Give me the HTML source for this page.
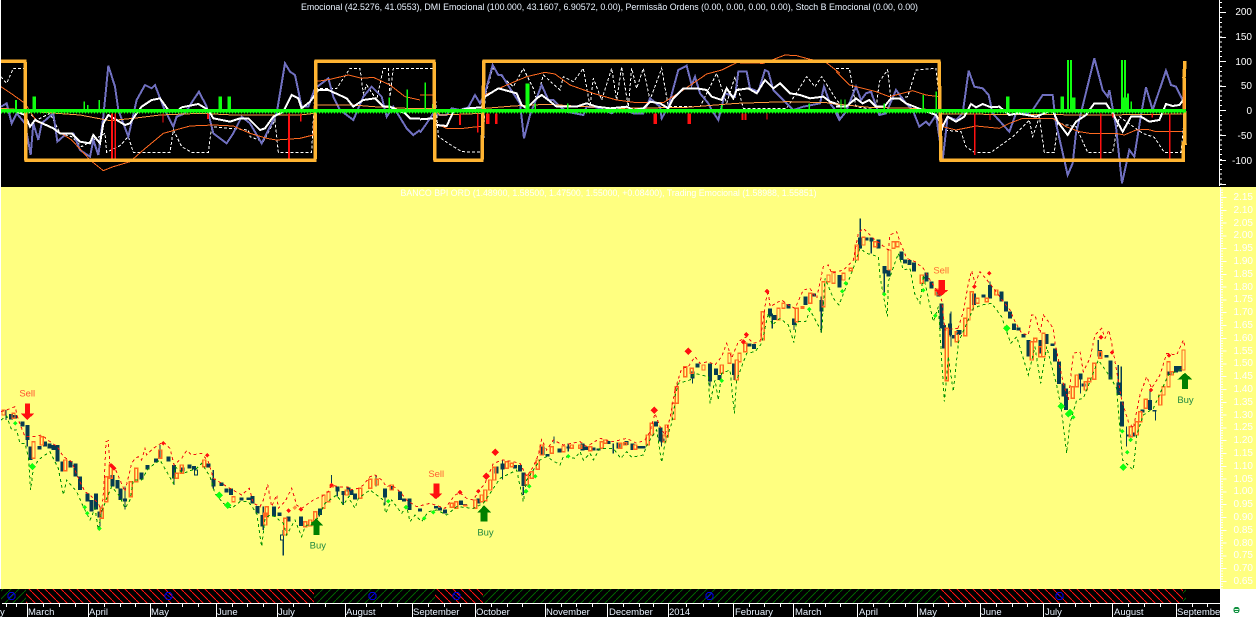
<!DOCTYPE html>
<html lang="pt"><head><meta charset="utf-8"><title>Chart</title>
<style>
html,body{margin:0;padding:0;background:#fff;width:1256px;height:617px;overflow:hidden}
svg{display:block}
text{font-family:"Liberation Sans",Arial,sans-serif;font-size:9.5px;fill:#eaf3ff}
.y text{fill:#fff;text-anchor:end;font-size:10px}
.t text{font-size:9.5px}
.n{fill:none}
.dk{fill:none;stroke:#063c50;stroke-width:12}
.wk{fill:none;stroke:#063c50;stroke-width:3.5}
.or{fill:none;stroke:#ff6a20;stroke-width:4}
.rd{fill:none;stroke:#f01010;stroke-width:3;stroke-dasharray:9 9}
.gd{fill:none;stroke:#009000;stroke-width:3;stroke-dasharray:9 9}
.gf{fill:#10ff10}.rf{fill:#ff1010}
.pu{fill:none;stroke:#7070c0;stroke-width:6}
.wh{fill:none;stroke:#fff;stroke-width:6}
.oa{fill:none;stroke:#ff6a20;stroke-width:3}
.ob{fill:none;stroke:#ff9a40;stroke-width:3}
.wd{fill:none;stroke:#fff;stroke-width:3;stroke-dasharray:9 6}
</style></head><body>
<svg xmlns="http://www.w3.org/2000/svg" width="1256" height="617" viewBox="0 0 1256 617" shape-rendering="crispEdges">
<defs>
<pattern id="hr" patternUnits="userSpaceOnUse" width="8" height="8"><path d="M0 0L8 8" stroke="#ff1010" stroke-width="1" fill="none"/></pattern>
<pattern id="hg" patternUnits="userSpaceOnUse" width="8" height="8"><path d="M0 8L8 0" stroke="#006000" stroke-width="1" fill="none"/></pattern>
</defs>
<rect width="1256" height="187" fill="#000"/>
<rect y="187" width="1256" height="402" fill="#ffff80"/>
<rect y="589" width="1220" height="28" fill="#000"/>
<rect x="1220" y="589" width="36" height="28" fill="#fff"/>
<rect x="0" y="0" width="1" height="589" fill="#fff"/>

<!-- TOP PANEL -->
<g transform="translate(0,0) scale(.33333)">
<polyline class="wd" points="3,230 20,250 40,205 75,205 80,330 110,360 150,340 180,400 215,410 245,440 315,400 320,457 360,437 385,410 400,457 510,457 520,390 530,410 545,440 575,457 625,457 635,380 745,390 750,410 790,425 825,360 835,457 935,457 945,265 1010,265 1020,250 1050,205 1080,205 1090,280 1100,255 1130,300 1150,205 1165,205 1170,290 1180,205 1260,205"/>
<polyline class="pu" points="3,320 20,310 35,370 50,340 75,370 92,465 100,370 115,420 125,370 160,340 172,425 200,400 220,400 240,450 270,470 280,420 295,465 310,350 325,197 345,260 355,330 385,410 410,300 435,255 455,265 465,255 490,320 520,380 530,350 555,340 580,300 597,275 620,320 640,400 680,430 700,400 725,350 750,370 785,430 810,380 830,340 855,190 870,215 885,225 905,320 925,320 945,265 985,235 1000,290 1020,330 1060,360 1090,290 1115,260 1145,290 1160,350 1180,320 1220,385 1240,405 1260,390"/>
<polyline class="oa" points="3,260 40,285 75,310 110,365 160,385 215,420 270,480 310,512 340,500 390,485 430,450 490,400 570,378 640,375 700,378 750,400 800,415 830,420 900,415 940,405 945,245 990,238 1045,225 1085,235 1120,232 1170,255 1215,290 1260,300"/>
<polyline class="ob" points="3,325 75,330 100,335 240,345 330,362 400,355 480,345 600,340 700,345 900,345 945,340 950,315 1060,315 1120,320 1220,325 1260,325"/>
<polyline class="wh" points="3,335 50,335 75,345 90,380 105,360 160,385 180,400 215,400 240,425 270,430 280,405 300,430 310,370 325,345 350,360 375,375 390,370 410,340 425,320 455,300 480,295 505,330 530,335 545,322 595,312 625,330 640,355 690,365 720,355 745,355 780,390 795,385 820,350 850,335 875,285 895,295 905,325 930,305 945,285 955,270 985,270 1040,295 1060,320 1090,300 1125,295 1150,320 1170,320 1215,340 1230,355 1260,355"/>
<path class="gf" d="M45 300h6v30h-6zM97 290h11v40h-11zM250 305h5v25h-5zM261 315h5v15h-5zM295 300h5v30h-5zM655 290h11v40h-11zM682 290h11v40h-11zM1165 292h5v38h-5zM1219 268h5v62h-5z"/>
<path class="rf" d="M333 340h6v142h-6zM343 340h5v135h-5zM487 340h4v28h-4zM621 340h6v17h-6zM864 340h6v142h-6zM900 340h5v25h-5z"/>
</g>
<g transform="translate(420,0) scale(.33333)">
<polyline class="wd" points="0,205 40,205 55,410 85,430 125,455 190,457 195,290 218,205 280,260 310,205 340,265 350,300 370,225 420,270 430,230 460,245 490,205 510,320 520,235 545,300 575,205 590,300 605,200 625,320 635,205 650,265 670,205 690,300 725,205 745,320 840,320 890,220 920,310 945,230 970,325 1100,325 1160,230 1185,260 1205,230 1250,300 1260,310"/>
<polyline class="pu" points="0,398 20,370 40,340 60,345 80,345 95,325 120,330 145,322 165,285 180,310 195,280 218,195 235,225 245,225 270,265 300,310 312,415 330,345 365,255 385,300 400,300 420,320 440,335 490,345 500,320 530,322 575,340 600,325 640,340 670,340 690,295 720,320 725,355 745,320 775,210 800,197 815,255 825,230 840,280 865,310 875,330 895,360 915,280 945,290 955,215 980,215 990,265 1015,275 1035,210 1045,215 1060,270 1100,310 1120,330 1150,320 1200,310 1212,260 1230,310 1250,335 1260,360"/>
<polyline class="oa" points="0,285 40,285 45,370 80,385 130,385 190,378 195,285 260,255 320,230 375,217 405,222 450,255 520,280 590,300 650,308 730,308 790,270 860,222 905,210 950,188 1030,190 1095,165 1130,167 1170,178 1215,185 1260,220"/>
<polyline class="ob" points="0,325 40,325 60,345 190,340 195,325 280,318 380,313 500,320 600,325 800,322 950,310 1100,305 1220,308 1260,315"/>
<polyline class="wh" points="0,358 40,355 50,375 80,378 100,335 145,325 185,322 195,290 235,265 290,280 305,315 320,325 350,295 365,285 385,300 410,320 440,320 470,320 500,310 530,320 570,325 620,320 640,330 670,325 690,305 720,310 745,325 760,295 790,265 830,265 860,270 875,290 905,300 920,265 940,295 950,270 985,265 1010,280 1035,240 1060,265 1080,250 1110,280 1140,285 1170,295 1210,290 1230,305 1260,315"/>
<path class="gf" d="M13 247h5v83h-5zM36 312h5v18h-5zM317 250h11v80h-11zM343 310h5v20h-5zM441 310h5v20h-5zM903 315h5v15h-5zM1165 310h5v20h-5z"/>
<path class="rf" d="M117 340h6v35h-6zM171 340h5v58h-5zM198 340h10v32h-10zM225 340h8v32h-8zM701 340h10v32h-10zM803 340h10v32h-10zM965 340h6v20h-6zM974 340h6v20h-6zM1039 340h4v18h-4z"/>
</g>
<g transform="translate(836,0) scale(.33333)">
<polyline class="wd" points="0,205 40,205 60,320 120,330 130,245 155,210 165,300 215,290 240,210 300,205 320,390 375,395 390,440 415,457 465,457 530,410 580,360 590,410 610,350 625,457 655,457 665,370 720,380 755,457 830,457 850,350 920,400 955,412 985,457 1035,457 1045,350"/>
<polyline class="pu" points="0,340 10,360 30,335 60,260 75,300 90,280 105,275 130,345 150,340 180,270 210,310 230,330 250,380 270,365 280,375 300,345 320,480 335,350 360,360 380,340 398,212 415,260 440,265 458,285 470,340 520,395 540,340 575,340 590,330 620,285 650,285 660,370 695,525 710,490 720,400 775,175 800,270 815,290 820,270 840,380 858,550 880,450 895,470 915,345 930,262 950,330 990,212 1005,255 1020,260 1040,300"/>
<polyline class="oa" points="0,215 40,255 80,265 120,275 160,290 230,272 270,285 310,290 320,380 360,390 420,378 490,385 520,370 560,355 650,355 690,380 730,395 760,400 840,400 865,405 900,390 935,388 960,395 1040,395"/>
<polyline class="ob" points="0,312 100,322 230,325 300,330 320,342 800,345 1040,342"/>
<polyline class="wh" points="0,320 30,320 60,295 80,310 100,300 120,320 145,320 165,295 190,295 210,310 235,320 260,330 300,345 320,380 335,350 360,365 385,350 405,312 420,322 440,312 465,322 490,320 520,345 545,340 600,350 625,340 650,330 665,365 695,405 720,365 750,345 775,310 810,310 830,340 860,395 885,350 915,350 940,365 970,360 990,312 1010,318 1030,315 1045,295"/>
<path class="gf" d="M13 298h4v32h-4zM25 298h4v32h-4zM143 310h4v20h-4zM259 285h5v45h-5zM298 275h5v55h-5zM510 290h11v40h-11zM673 290h11v40h-11zM693 180h6v150h-6zM702 180h6v150h-6zM706 292h12v38h-12zM855 180h6v150h-6zM864 180h6v150h-6zM873 280h6v50h-6zM883 305h5v25h-5zM855 292h20v38h-20z"/>
<path class="rf" d="M414 340h4v125h-4zM460 340h4v20h-4zM792 340h5v142h-5zM828 340h5v12h-5zM946 340h5v12h-5zM999 340h5v142h-5z"/>
</g>
<!-- mustard permission line -->
<polyline points="1,61 25,61 26,160 315,160 316,61 434,61 435,160 482,160 484,61 939,61 941,160 1183,160 1183,143 1185,143 1184,77 1185,61" fill="none" stroke="#ffb432" stroke-width="3.5"/>
<!-- zero line -->
<rect x="1" y="109" width="1185" height="3.5" fill="#10ff10"/>
<line x1="1" y1="113" x2="1186" y2="113" stroke="#10ff10" stroke-width="1" stroke-dasharray="1 2"/>
<line x1="1184" y1="90" x2="1184" y2="110" stroke="#ff6a20" stroke-width="1"/>

<text x="301" y="10" textLength="617" lengthAdjust="spacingAndGlyphs">Emocional (42.5276, 41.0553), DMI Emocional (100.000, 43.1607, 6.90572, 0.00), Permissão Ordens (0.00, 0.00, 0.00, 0.00), Stoch B Emocional (0.00, 0.00)</text>

<!-- top axis -->
<line x1="1219.5" y1="0" x2="1219.5" y2="186" stroke="#fff"/>
<line x1="1221" y1="2.2" x2="1221" y2="186" stroke="#fff" stroke-width="2" stroke-dasharray="1 3.9"/>
<path d="M1220 12.5h6M1220 37.5h6M1220 61.5h6M1220 86.5h6M1220 110.5h6M1220 135.5h6M1220 160.5h6M1220 184.5h6" stroke="#fff" fill="none"/>
<g class="y"><text x="1252" y="15">200</text><text x="1252" y="40">150</text><text x="1252" y="65">100</text><text x="1252" y="89">50</text><text x="1252" y="114">0</text><text x="1252" y="139">-50</text><text x="1252" y="164">-100</text></g>

<!-- main title -->
<text x="400.5" y="196" textLength="416" lengthAdjust="spacingAndGlyphs" style="fill:#fff">BANCO BPI ORD (1.48900, 1.58500, 1.47500, 1.55000, +0.08400), Trading Emocional (1.58988, 1.55851)</text>

<!-- PRICE -->
<g transform="translate(0,380) scale(.33333)">
<path class="wk" d="M850 450V527M375 320V388M82 170V200M18 90V120M480 195V235M640 270V325M522 250V315M790 380V450M1012 320V350M300 380V440M1030 345V375M995 285V320M958 400V410"/>
<path class="dk" d="M33 102V118M45 105V115M68 125V140M82 135V180M92 200V240M118 198V208M135 185V200M148 190V205M160 195V210M172 195V245M188 245V275M212 243V262M226 250V290M240 290V330M262 340V365M275 360V395M288 340V388M298 395V412M338 285V320M352 300V325M362 325V360M375 355V365M425 278V298M442 255V268M468 235V248M505 230V245M522 255V295M548 262V275M568 253V265M582 258V268M625 250V262M640 295V320M665 308V318M680 325V338M693 325V345M725 353V362M745 353V360M758 348V370M773 378V400M788 405V440M822 380V410M838 398V408M866 410V425M903 410V438M960 385V405M1012 320V335M1030 333V345M1046 322V335"/>
<path d="M842 465h9v15h-9zM583 270h9v15h-9z" fill="#ffff80" stroke="#063c50" stroke-width="3"/>
<path class="or" d="M6 90h9v15h-9zM36 100h9v15h-9zM96 185h9v50h-9zM121 170h9v25h-9zM191 240h9v32h-9zM301 385h9v30h-9zM314 290h9v75h-9zM328 255h9v40h-9zM388 305h9v45h-9zM404 265h9v40h-9zM476 210h9v25h-9zM526 280h9v15h-9zM541 255h9v25h-9zM608 240h9v20h-9zM696 350h9v15h-9zM791 400h9v35h-9zM796 380h9v30h-9zM851 415h9v50h-9zM941 395h9v30h-9zM911 425h9v15h-9zM926 420h9v18h-9zM966 345h9v40h-9zM981 335h9v30h-9zM991 315h9v5h-9zM1036 330h9v15h-9z"/>
<polyline class="rd" points="3,95 20,90 45,80 55,120 75,170 105,170 125,165 150,185 172,200 190,230 215,245 235,295 255,335 270,345 295,370 305,395 312,320 318,185 325,182 330,260 345,265 360,300 375,335 395,250 405,235 415,230 425,240 435,205 440,225 460,205 475,195 490,185 510,205 522,255 545,235 560,212 575,225 605,220 625,245 640,295 665,310 690,325 725,345 748,325 760,370 780,380 790,360 803,313 815,380 830,345 835,385 855,365 875,325 890,375 905,385 940,360 950,355 965,350 985,335 995,315 1015,320 1050,322"/>
<polyline class="gd" points="3,120 20,108 35,150 50,150 60,190 75,190 85,230 92,330 100,265 115,240 135,225 150,215 175,265 190,345 200,300 230,335 250,380 270,420 285,385 295,450 305,395 318,360 335,320 360,350 375,385 390,360 400,300 425,300 445,265 480,240 520,310 525,260 550,280 590,265 605,250 630,290 645,340 670,370 695,385 720,365 745,365 770,400 785,500 795,415 810,405 825,410 850,430 860,465 885,420 905,470 915,440 950,420 975,370 1010,345 1030,375 1050,345"/>
<path class="gf" d="M46 123l7 7-7 7-7-7zM97 249l11 11-11 11-11-11zM254 375l7 7-7 7-7-7zM262 393l7 7-7 7-7-7zM298 439l7 7-7 7-7-7zM658 335l11 11-11 11-11-11zM683 365l11 11-11 11-11-11z"/>
<path class="rf" d="M490 183l7 7-7 7-7-7zM622 219l7 7-7 7-7-7zM335 250l8 8-8 8-8-8zM342 257l8 8-8 8-8-8zM866 385l7 7-7 7-7-7zM903 381l7 7-7 7-7-7zM995 308l7 7-7 7-7-7z"/>
<path fill="#ff9040" d="M885 376l7 7-7 7-7-7z"/>
<path fill="#ff1010" d="M75 70h15v30h13l-21 20-21-20h14z"/>
<path fill="#008000" d="M948 415l22 22h-12v28h-18v-28h-10z"/>
<text transform="translate(58,50) scale(3)" style="fill:#ff5030">Sell</text>
<text transform="translate(929,506) scale(3)" style="fill:#208840">Buy</text>
</g>
<g transform="translate(350,380) scale(.33333)">
<path class="wk" d="M78 285V320M458 238V298M790 190V220M655 190V215M105 350V375M520 320V345M612 170V190M935 185V200"/>
<path class="dk" d="M5 330V345M15 340V358M105 325V352M125 318V328M150 335V360M162 355V365M178 355V390M210 385V395M258 378V385M270 382V392M285 388V400M333 362V375M345 372V376M385 355V370M440 260V280M458 250V268M495 255V265M510 255V275M520 278V318M578 200V225M592 222V230M628 205V217M655 200V205M698 190V212M710 200V210M730 203V212M745 205V212M775 183V192M805 188V205M830 183V195M848 190V210M868 198V205M880 198V205M918 125V140M932 142V185M938 175V188"/>
<path class="or" d="M26 325h9v30h-9zM56 298h9v27h-9zM76 298h9v17h-9zM121 315h9v15h-9zM301 370h9v12h-9zM314 365h9v20h-9zM341 375h9v3h-9zM371 360h9v25h-9zM391 345h9v20h-9zM401 330h9v32h-9zM416 300h9v30h-9zM428 262h9v38h-9zM466 245h9v20h-9zM481 250h9v10h-9zM526 285h9v30h-9zM541 275h9v20h-9zM559 240h9v28h-9zM571 195h9v30h-9zM601 200h9v20h-9zM636 198h9v17h-9zM661 195h9v10h-9zM686 195h9v10h-9zM716 200h9v12h-9zM751 185h9v20h-9zM761 180h9v10h-9zM806 190h9v15h-9zM821 188h9v7h-9zM851 195h9v13h-9zM889 165h9v30h-9zM901 130h9v35h-9zM946 135h9v35h-9zM939 165h9v20h-9zM966 70h9v48h-9zM976 20h9v50h-9z"/>
<polyline class="rd" points="0,330 25,325 40,315 60,290 75,285 95,300 110,320 125,315 150,335 170,360 200,380 240,370 270,380 285,385 300,365 315,345 330,338 350,355 370,360 385,335 405,310 430,250 458,240 490,245 510,250 530,290 550,260 565,225 575,178 590,210 610,180 640,195 690,185 710,200 750,175 790,185 830,175 860,190 885,180 900,155 915,100 930,140 945,165 960,115 975,30 990,0"/>
<polyline class="gd" points="0,360 15,385 25,355 60,330 100,360 107,400 125,360 155,400 170,380 180,425 195,405 215,425 235,395 260,390 290,405 320,380 370,385 400,370 420,340 450,295 500,270 520,365 530,300 570,240 590,230 630,255 640,230 675,235 690,215 700,240 720,220 730,240 750,205 790,205 812,235 830,215 845,232 880,225 893,190 920,150 935,248 945,190 965,130 975,70"/>
<path class="gf" d="M115 357l7 7-7 7-7-7zM168 375l7 7-7 7-7-7zM223 408l7 7-7 7-7-7zM250 390l7 7-7 7-7-7zM528 327l7 7-7 7-7-7zM538 312l7 7-7 7-7-7zM556 282l7 7-7 7-7-7zM655 222l7 7-7 7-7-7z"/>
<path class="rf" d="M913 80l11 11-11 11-11-11zM436 206l11 11-11 11-11-11zM409 278l11 11-11 11-11-11zM385 327l7 7-7 7-7-7zM330 330l7 7-7 7-7-7z"/>
<path fill="#ff1010" d="M250 310h18v30h10l-20 18-21-18h13z"/>
<path fill="#008000" d="M402 376l22 22h-12v27h-20v-27h-10z"/>
<text transform="translate(235,291) scale(3)" style="fill:#ff6030">Sell</text>
<text transform="translate(382,467) scale(3)" style="fill:#208840">Buy</text>
</g>
<g transform="translate(640,200) scale(.33333)">
<path class="wk" d="M661 55V145M694 115V160M733 200V285M544 290V398M930 340V410M397 340V385M210 495V560M158 535V550M462 375V390M282 525V540"/>
<path class="dk" d="M158 515V535M172 490V502M210 490V545M228 505V525M238 525V540M282 490V525M328 430V440M342 432V447M390 325V350M405 345V360M445 312V325M462 355V375M497 290V315M522 280V290M544 300V335M598 225V262M660 112V145M680 112V122M695 112V125M715 118V145M733 198V220M745 210V230M785 155V180M795 178V190M808 180V195M822 188V215M860 218V245M875 245V265M895 265V290M905 310V385M912 375V445M930 370V405M942 405V415M955 390V405"/>
<path class="or" d="M131 500h9v30h-9zM151 505h9v15h-9zM186 495h9v15h-9zM241 495h9v25h-9zM264 460h9v30h-9zM286 480h9v60h-9zM294 460h9v25h-9zM311 430h9v25h-9zM364 335h9v85h-9zM411 325h9v35h-9zM426 310h9v15h-9zM466 325h9v40h-9zM483 320h9v5h-9zM506 280h9v30h-9zM546 245h9v75h-9zM561 225h9v20h-9zM576 215h9v35h-9zM606 220h9v20h-9zM628 205h9v7h-9zM646 135h9v45h-9zM666 112h9v23h-9zM701 125h9v15h-9zM744 150h9v60h-9zM756 125h9v20h-9zM768 125h9v15h-9zM841 225h9v25h-9zM916 385h9v157h-9zM946 395h9v30h-9zM886 268h9v17h-9z"/>
<polyline class="rd" points="105,570 125,505 145,500 165,470 180,490 205,485 225,495 245,470 260,430 275,475 295,425 320,410 340,430 360,425 378,300 385,270 390,320 425,300 445,315 465,325 490,270 510,265 530,295 550,200 565,195 575,220 610,210 640,180 655,100 670,85 690,105 700,115 745,150 750,105 770,95 780,125 800,175 825,185 850,205 870,240 890,270 905,300 915,390 950,385 960,385"/>
<polyline class="gd" points="105,590 115,550 150,540 165,520 205,530 210,610 225,540 235,600 245,520 270,510 283,640 290,540 320,460 345,455 365,430 385,340 397,375 420,355 445,375 462,428 470,365 497,365 510,330 545,395 555,235 580,295 597,315 640,205 660,145 680,160 715,170 720,230 742,350 745,245 775,160 790,210 810,205 825,285 840,310 850,225 880,365 895,320 913,605 925,470 940,575 955,430"/>
<path class="gf" d="M245 535l7 7-7 7-7-7zM508 321l7 7-7 7-7-7zM607 267l7 7-7 7-7-7zM617 243l7 7-7 7-7-7zM733 276l7 7-7 7-7-7zM850 264l7 7-7 7-7-7zM886 340l7 7-7 7-7-7z"/>
<path class="rf" d="M145 443l11 11-11 11-11-11zM310 418l8 8-8 8-8-8zM319 396l8 8-8 8-8-8zM381 266l8 8-8 8-8-8z"/>
<path fill="#ff1010" d="M895 240h20v30h10l-21 18-21-18h12z"/>
<text transform="translate(880,221) scale(3)" style="fill:#ff6a30">Sell</text>
</g>
<g transform="translate(920,240) scale(.33333)">
<path class="wk" d="M93 215V320M535 300V350M604 380V470M707 510V542M690 450V510M210 125V175M620 560V620M595 375V430M482 415V460"/>
<path class="dk" d="M118 270V282M162 160V195M190 163V172M210 135V175M245 155V185M258 185V215M270 215V235M282 250V270M295 262V272M310 282V292M325 300V350M362 300V340M380 282V312M398 310V318M405 325V365M417 365V432M430 430V470M438 445V510M482 400V418M490 430V440M540 330V350M560 345V352M572 362V418M595 428V465M606 485V560M625 583V590M640 578V590M668 508V518M690 480V510M703 510V515M748 395V405M768 378V398M780 378V395"/>
<path class="or" d="M131 235h9v52h-9zM141 205h9v35h-9zM151 155h9v55h-9zM168 175h9v15h-9zM196 175h9v10h-9zM224 150h9v15h-9zM331 305h9v55h-9zM366 280h9v70h-9zM341 295h9v10h-9zM356 320h9v30h-9zM454 440h9v35h-9zM466 405h9v35h-9zM493 425h9v25h-9zM503 415h9v10h-9zM518 370h9v48h-9zM536 335h9v20h-9zM628 560h9v30h-9zM646 545h9v40h-9zM656 515h9v30h-9zM673 478h9v27h-9zM716 465h9v30h-9zM726 440h9v25h-9zM741 365h9v75h-9zM751 395h9v10h-9zM786 330h9v60h-9z"/>
<polyline class="rd" points="114,265 130,215 145,130 155,92 165,130 180,95 205,125 225,150 250,185 270,210 285,245 305,280 325,285 335,225 345,225 360,280 370,225 400,265 405,310 430,430 445,480 460,340 480,335 490,395 510,355 525,285 545,265 555,295 567,270 580,335 605,480 625,545 640,565 660,465 680,410 695,445 720,405 740,340 770,345 790,300 795,320"/>
<polyline class="gd" points="114,310 160,205 185,195 215,190 245,230 272,310 290,290 325,405 345,320 362,430 380,320 410,435 423,500 440,640 450,550 470,480 490,475 535,360 570,410 590,445 608,660 640,690 650,585 670,525 700,505 745,405 790,385"/>
<path class="gf" d="M424 488l11 11-11 11-11-11zM445 511l11 11-11 11-11-11zM450 507l11 11-11 11-11-11zM460 525l7 7-7 7-7-7zM260 254l11 11-11 11-11-11zM607 567l7 7-7 7-7-7zM622 630l7 7-7 7-7-7zM632 593l7 7-7 7-7-7zM610 671l11 11-11 11-11-11z"/>
<path class="rf" d="M208 93l7 7-7 7-7-7zM163 133l7 7-7 7-7-7zM543 285l7 7-7 7-7-7zM576 331l7 7-7 7-7-7zM693 443l7 7-7 7-7-7zM747 340l7 7-7 7-7-7z"/>
<path fill="#008000" d="M795 398l21 20h-12v29h-18v-29h-13z"/>
<text transform="translate(772,489) scale(3)" style="fill:#208840">Buy</text>
</g>

<!-- price axis -->
<line x1="1220.5" y1="187" x2="1220.5" y2="589" stroke="#fff"/>
<line x1="1222" y1="189.3" x2="1222" y2="589" stroke="#fff" stroke-width="2" stroke-dasharray="1 1.56"/>
<line x1="1223.5" y1="197" x2="1223.5" y2="589" stroke="#fff" stroke-width="6" stroke-dasharray="1 11.8"/>
<g class="y">
<text x="1253" y="200">2.15</text><text x="1253" y="213">2.10</text><text x="1253" y="226">2.05</text><text x="1253" y="238">2.00</text><text x="1253" y="251">1.95</text><text x="1253" y="264">1.90</text><text x="1253" y="277">1.85</text><text x="1253" y="290">1.80</text><text x="1253" y="302">1.75</text><text x="1253" y="315">1.70</text><text x="1253" y="328">1.65</text><text x="1253" y="341">1.60</text><text x="1253" y="354">1.55</text><text x="1253" y="366">1.50</text><text x="1253" y="379">1.45</text><text x="1253" y="392">1.40</text><text x="1253" y="405">1.35</text><text x="1253" y="418">1.30</text><text x="1253" y="430">1.25</text><text x="1253" y="443">1.20</text><text x="1253" y="456">1.15</text><text x="1253" y="469">1.10</text><text x="1253" y="482">1.05</text><text x="1253" y="494">1.00</text><text x="1253" y="507">0.95</text><text x="1253" y="520">0.90</text><text x="1253" y="533">0.85</text><text x="1253" y="546">0.80</text><text x="1253" y="558">0.75</text><text x="1253" y="571">0.70</text><text x="1253" y="584">0.65</text>
</g>

<!-- signal strip -->
<rect x="1" y="589" width="25" height="14" fill="url(#hg)"/>
<rect x="26" y="589" width="288" height="14" fill="url(#hr)"/>
<rect x="314" y="589" width="121" height="14" fill="url(#hg)"/>
<rect x="435" y="589" width="48" height="14" fill="url(#hr)"/>
<rect x="483" y="589" width="457" height="14" fill="url(#hg)"/>
<rect x="940" y="589" width="243" height="14" fill="url(#hr)"/>
<rect x="1183" y="589" width="3" height="14" fill="url(#hg)"/>
<g fill="none" stroke="#0000e0" stroke-width="1"><circle cx="11.5" cy="596" r="3.7"/><circle cx="168.5" cy="596" r="3.7"/><circle cx="372.5" cy="596" r="3.7"/><circle cx="456.5" cy="596" r="3.7"/><circle cx="709.5" cy="596" r="3.7"/><circle cx="1059.5" cy="596" r="3.7"/></g>
<g stroke="#0000e0" fill="none"><path d="M9 598l5-5M166 594l5 4M370 598l5-5M454 594l5 4M707 598l5-5M1057 594l5 4"/></g>

<!-- time axis -->
<rect x="2" y="603" width="1218" height="1" fill="#fff"/>
<path fill="none" stroke="#fff" d="M27.5 604v13M88.5 604v13M150.5 604v13M216.5 604v13M277.5 604v13M345.5 604v13M412.5 604v13M475.5 604v13M545.5 604v13M607.5 604v13M668.5 604v13M733.5 604v13M793.5 604v13M857.5 604v13M917.5 604v13M980.5 604v13M1043.5 604v13M1112.5 604v13M1176.5 604v13"/>
<path fill="none" stroke="#fff" d="M6.5 604v3M16.5 604v3M43.5 604v3M59.5 604v3M75.5 604v3M104.5 604v3M120.5 604v3M135.5 604v3M166.5 604v3M182.5 604v3M198.5 604v3M232.5 604v3M247.5 604v3M263.5 604v3M293.5 604v3M309.5 604v3M325.5 604v3M366.5 604v3M381.5 604v3M397.5 604v3M428.5 604v3M444.5 604v3M460.5 604v3M491.5 604v3M507.5 604v3M522.5 604v3M561.5 604v3M576.5 604v3M592.5 604v3M623.5 604v3M639.5 604v3M653.5 604v3M686.5 604v3M703.5 604v3M718.5 604v3M749.5 604v3M764.5 604v3M780.5 604v3M809.5 604v3M825.5 604v3M840.5 604v3M873.5 604v3M889.5 604v3M905.5 604v3M933.5 604v3M948.5 604v3M965.5 604v3M996.5 604v3M1012.5 604v3M1027.5 604v3M1059.5 604v3M1075.5 604v3M1090.5 604v3M1128.5 604v3M1144.5 604v3M1160.5 604v3M1192.5 604v3M1207.5 604v3"/>
<g class="t">
<text x="0" y="615">y</text><text x="28" y="615">March</text><text x="89" y="615">April</text><text x="151" y="615">May</text><text x="217" y="615">June</text><text x="278" y="615">July</text><text x="346" y="615">August</text><text x="413" y="615">September</text><text x="476" y="615">October</text><text x="546" y="615">November</text><text x="609" y="615">December</text><text x="669" y="615">2014</text><text x="735" y="615">February</text><text x="795" y="615">March</text><text x="859" y="615">April</text><text x="919" y="615">May</text><text x="981" y="615">June</text><text x="1045" y="615">July</text><text x="1114" y="615">August</text>
</g>
<svg x="1177" y="603" width="43" height="14" overflow="hidden"><text x="0" y="12">September</text></svg>

<!-- icon -->
<circle cx="1236.5" cy="610" r="3.2" fill="#109040"/>
<path d="M1234.5 609.5h4M1235 611.5h3" stroke="#e8fff0" fill="none"/>
</svg>
</body></html>
